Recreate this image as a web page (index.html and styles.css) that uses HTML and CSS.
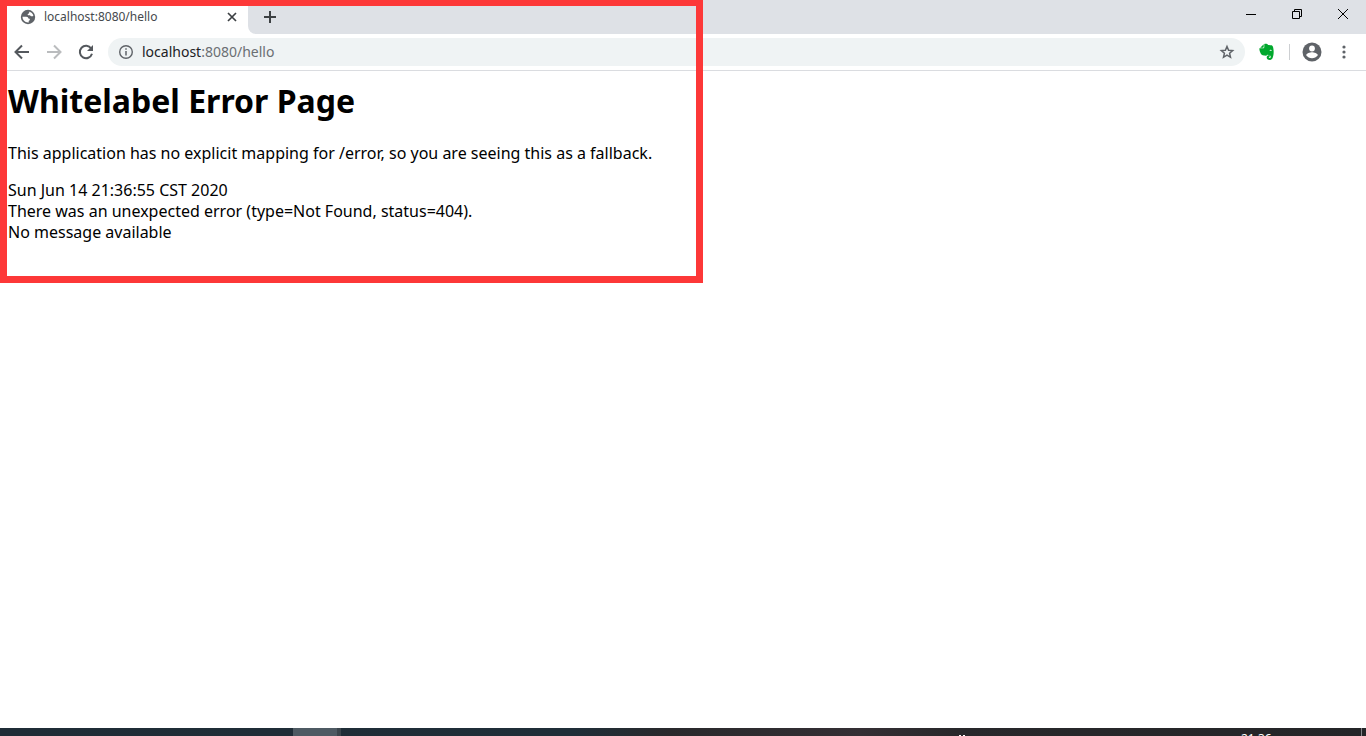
FILE: index.html
```html
<!DOCTYPE html>
<html lang="en">
<head>
<meta charset="utf-8">
<title>localhost:8080/hello</title>
<link rel="stylesheet" href="styles.css">
</head>
<body>
<div class="screen">
  <header class="tab-strip">
    <div class="tab">
      <svg class="favicon" viewBox="0 0 16 16" aria-hidden="true">
        <circle cx="8" cy="8" r="7.200" fill="#5f6368"/>
        <path d="M8.500 2.500c2.300.2 4.200 1.700 4.900 3.900-.4.900-1.300 1.100-2.200.8-.8-.3-.8-1-1.700-1H8.200c-.8 0-.8-1 0-1.200.8-.2.200-1 .9-1.300.5-.3.200-.9-.6-1.200zM2.500 7.700h3.800c1.400 0 2 .8 2 1.700 1 0 1.600.5 1.600 1.300 0 .9-1.200.7-1.200 1.500v1.200c-3.400.3-6.200-2.300-6.200-5.700z" fill="#fff"/>
      </svg>
      <span class="tab-title">localhost:8080/hello</span>
      <button class="tab-close" aria-label="Close tab">
        <svg viewBox="0 0 10 10" width="10" height="10"><path d="M1 1l8 8M9 1L1 9" stroke="#3c4043" stroke-width="1.700" fill="none"/></svg>
      </button>
    </div>
    <div class="strip-rest">
      <button class="new-tab" aria-label="New tab">
        <svg viewBox="0 0 12 12" width="12" height="12"><path d="M6 0v12M0 6h12" stroke="#3c4043" stroke-width="2" fill="none"/></svg>
      </button>
      <div class="window-controls">
        <button aria-label="Minimize"><svg viewBox="0 0 10 10" width="10" height="10"><path d="M0 5.500h10" stroke="#000"/></svg></button>
        <button aria-label="Restore"><svg viewBox="0 0 10 10" width="10" height="10" fill="none" stroke="#000"><path d="M.5 2.500h7v7h-7zM2.500 2.500v-2h7v7h-2"/></svg></button>
        <button aria-label="Close"><svg viewBox="0 0 10 10" width="10" height="10"><path d="M0 0l10 10M10 0L0 10" stroke="#000"/></svg></button>
      </div>
    </div>
  </header>
  <nav class="toolbar">
    <button class="nav-button" aria-label="Back"><svg viewBox="0 0 16 16" width="16" height="16" fill="none" stroke="#54585d" stroke-width="2"><path d="M15 8H2.500M8 1.500L1.500 8 8 14.500"/></svg></button>
    <button class="nav-button" aria-label="Forward" disabled><svg viewBox="0 0 16 16" width="16" height="16" fill="none" stroke="#babcbe" stroke-width="2"><path d="M1 8h12.500M8 1.500L14.500 8 8 14.500"/></svg></button>
    <button class="nav-button" aria-label="Reload"><svg viewBox="0 0 16 16" width="16" height="16"><path d="M13.200 4.500A6.200 6.200 0 1 0 14 9.800" fill="none" stroke="#54585d" stroke-width="2"/><path d="M15 1v6H9z" fill="#54585d"/></svg></button>
    <div class="address-bar">
      <button class="site-info" aria-label="View site information"><svg viewBox="0 0 16 16" width="16" height="16"><circle cx="8" cy="8" r="6.300" fill="none" stroke="#5f6368" stroke-width="1.400"/><path d="M8 7v4.500M8 4.300v1.500" stroke="#5f6368" stroke-width="1.500"/></svg></button>
      <a class="url" href="#">localhost<span class="url-path">:8080/hello</span></a>
      <button class="bookmark" aria-label="Bookmark this page"><svg viewBox="0 0 16 16" width="16" height="16"><path d="M8 2.500l1.600 3.700 4.100.4-3.100 2.700.9 4L8 11.200l-3.500 2.100.9-4-3.100-2.700 4.100-.4z" fill="none" stroke="#5f6368" stroke-width="1.500"/></svg></button>
    </div>
    <button class="extension" aria-label="Evernote"><svg viewBox="0 0 16 18" width="16" height="18"><path d="M1.200 4.700L4.700 1.300v2.500c0 .6-.3.900-.9.900zM5.300 1c1.900-.4 3.200.1 3.700.9 1.800.1 4.200.2 4.700 1.300.9 1.900 1.300 6 .6 9.400-.5 2.900-1.300 4.300-3.500 4.300-2.200 0-3.200-1.100-3.100-2.700.1-1.400 1.200-2 2.900-2v2c-1.100-.1-1.200.8 0 .9 1.200 0 1.300-1.500.8-2.300-1-.4-2-.5-2.500-1.300-.9 1.200-2.100 1.300-3.700 1.100-2.200-.2-3.100-.9-3.700-2.600C.8 8.600.2 7 .4 5.300h3.500c1 0 1.400-.5 1.400-1.400z" fill="#00a82d"/><path d="M10.500 7.900c.3-1.500 1.900-1.500 2.400.2-.8-.3-1.600-.3-2.400-.2z" fill="#fff"/></svg></button>
    <span class="divider"></span>
    <button class="profile" aria-label="Profile"><svg viewBox="0 0 20 20" width="20" height="20"><circle cx="10" cy="10" r="9.500" fill="#5f6368"/><circle cx="10" cy="6.500" r="2.900" fill="#fff"/><path d="M4.200 13.300c0-2 3.900-3 5.800-3s5.800 1 5.800 3c-2.700 3.800-8.900 3.800-11.600 0z" fill="#fff"/></svg></button>
    <button class="menu" aria-label="Menu"><svg viewBox="0 0 4 14" width="4" height="14" fill="#5f6368"><circle cx="2" cy="2" r="1.600"/><circle cx="2" cy="7" r="1.600"/><circle cx="2" cy="12" r="1.600"/></svg></button>
  </nav>
  <main class="page">
    <h1>Whitelabel Error Page</h1>
    <p>This application has no explicit mapping for /error, so you are seeing this as a fallback.</p>
    <div>Sun Jun 14 21:36:55 CST 2020</div>
    <div>There was an unexpected error (type=Not Found, status=404).</div>
    <div>No message available</div>
  </main>
  <footer class="taskbar">
    <span class="task-active"></span>
    <svg class="tray-icon" viewBox="0 0 6 2" width="6" height="2" aria-hidden="true"><path d="M0 0h2v2H0zM4 0h2v2H4z" fill="#fff"/></svg>
    <time class="clock">21:36</time>
    <span class="show-desktop"></span>
  </footer>
  <div class="highlight"></div>
</div>
</body>
</html>
```
FILE: styles.css
```css
* { box-sizing: border-box; }
body { margin: 0; background: #fff; color: #000; font-family: "Noto Sans", "Open Sans", sans-serif; }
button { display: flex; align-items: center; justify-content: center; flex: none; padding: 0; border: 0; background: none; }
svg { display: block; flex: none; }
.screen { position: relative; display: flex; flex-direction: column; height: 100vh; overflow: hidden; }

.tab-strip { display: flex; flex: none; height: 34px; }
.tab { display: flex; align-items: center; width: 248px; padding: 0 8px 0 20px; }
.favicon { width: 16px; height: 16px; }
.tab-title { flex: 1; margin-left: 8px; font-size: 12px; line-height: 16px; color: #45494d; }
.tab-close { width: 16px; height: 16px; }
.strip-rest { display: flex; flex: 1; justify-content: space-between; background: #dee1e6; border-bottom-left-radius: 8px; }
.new-tab { width: 28px; height: 34px; margin-left: 8px; }
.window-controls { display: flex; }
.window-controls button { width: 46px; height: 28px; }

.toolbar { display: flex; flex: none; align-items: center; height: 37px; padding: 0 10px 0 6px; border-bottom: 1px solid #dadce0; }
.nav-button { width: 32px; height: 28px; }
.address-bar { display: flex; flex: 1; align-items: center; height: 28px; margin-left: 6px; padding: 0 10px; border-radius: 14px; background: #eff3f4; }
.site-info, .bookmark { width: 16px; height: 16px; }
.url { flex: 1; margin-left: 8px; font-size: 14px; line-height: 20px; color: #202124; text-decoration: none; }
.url-path { color: #6b6f73; }
.extension { width: 16px; height: 20px; margin-left: 14px; }
.divider { width: 1px; height: 16px; margin-left: 14px; background: #cdcfd2; }
.profile { width: 20px; height: 20px; margin-left: 12px; }
.menu { width: 24px; height: 20px; margin-left: 10px; }

.page { flex: 1; padding: 8px; font-size: 16px; line-height: 21px; }
.page h1 { margin: 0 0 20px; font-size: 32px; line-height: 44px; font-weight: 700; }
.page p { margin: 0 0 16px; }

.taskbar { display: flex; flex: none; height: 8px; overflow: hidden; background: linear-gradient(90deg, #1f2c36 0%, #1f2e38 42%, #29292c 49%, #342f34 63%, #28282b 70%, #242528 100%); }
.task-active { width: 48px; margin-left: 293px; background: #4e5a63; border-right: 4px solid #3b454c; }
.tray-icon { margin: 7px 0 0 auto; }
.clock { width: 31px; margin: 3px 89px 0 276px; font-size: 12px; line-height: 16px; color: #fff; }
.show-desktop { width: 5px; border-left: 1px solid #85868a; }

.highlight { position: absolute; top: 0; left: 0; width: 703px; height: 283px; border: 7px solid #fd3838; border-top-width: 6px; pointer-events: none; }
```
